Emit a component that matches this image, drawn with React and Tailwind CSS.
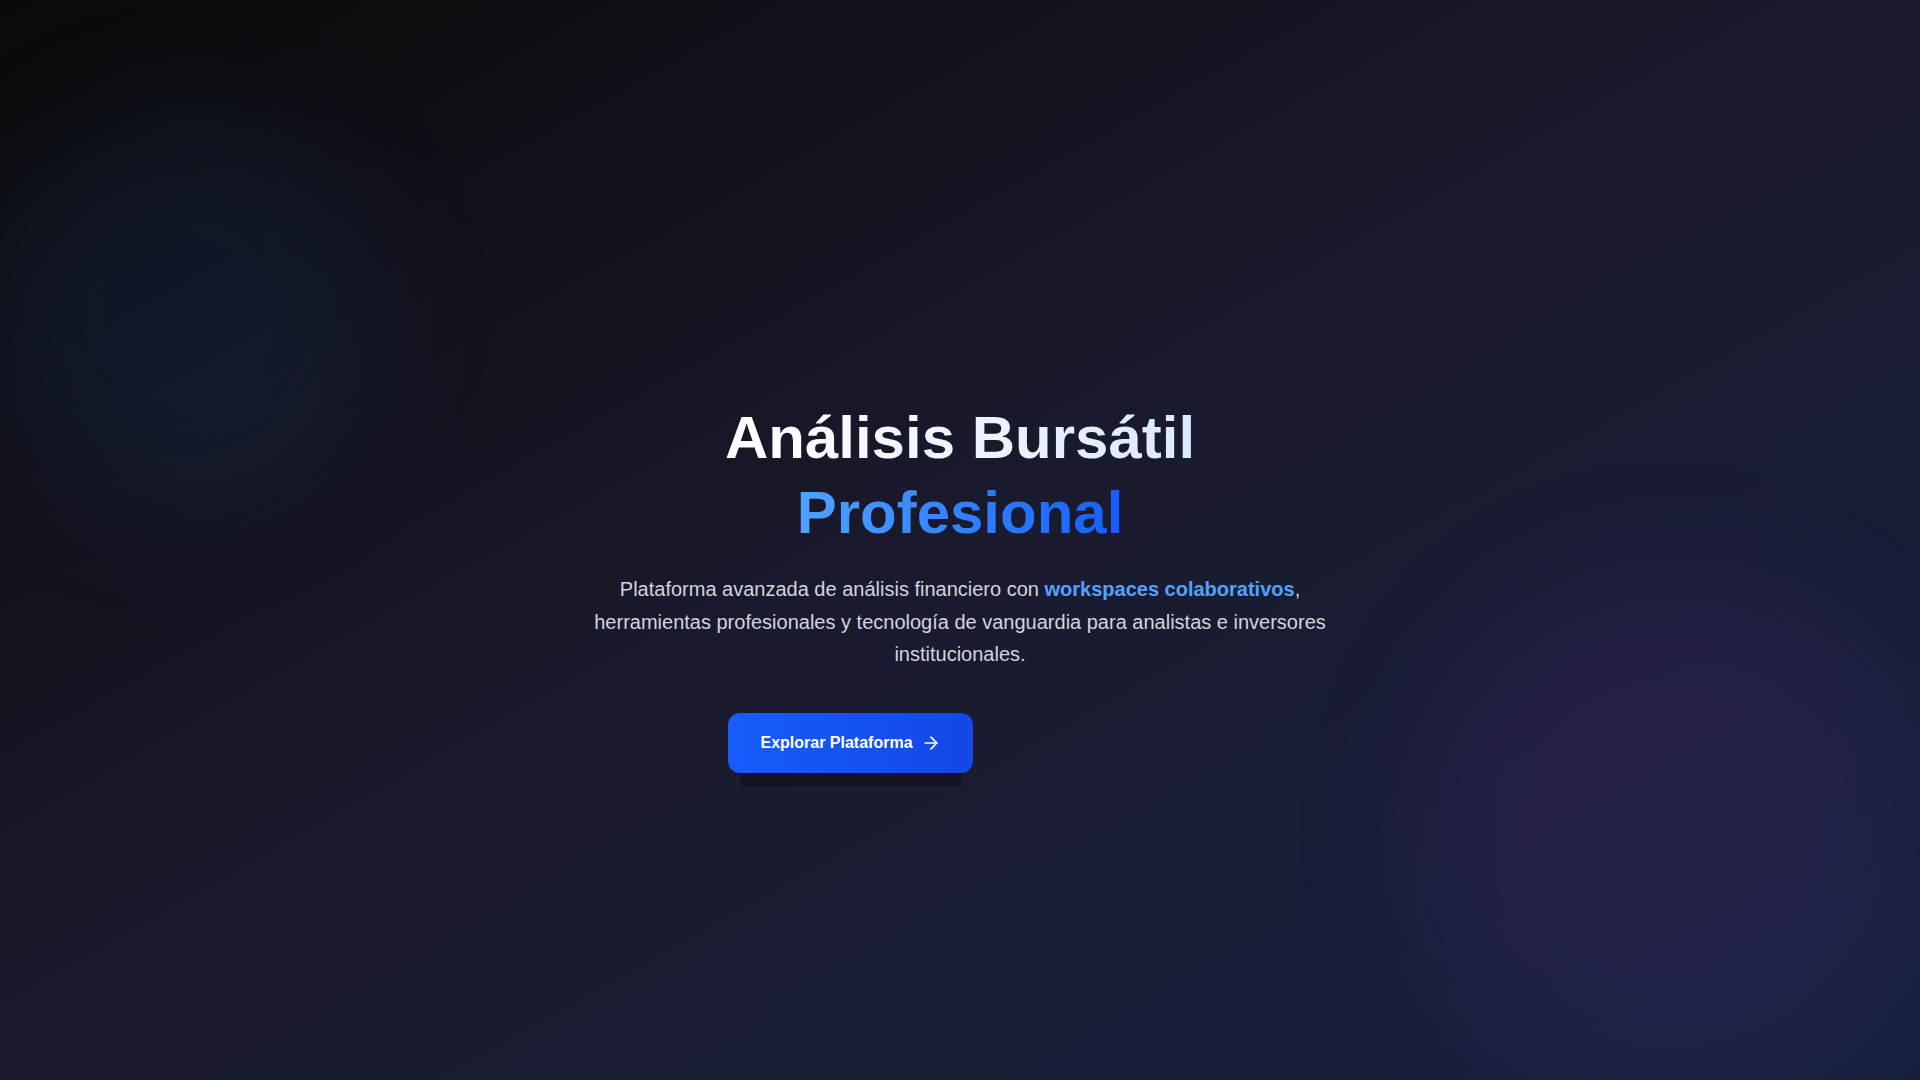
import React from 'react';
import { ArrowRight } from 'lucide-react';

const App = () => {
  return (
    <div className="relative min-h-screen bg-gradient-to-br from-[#0a0a0a] via-[#1a1a2e] to-[#16213e] font-['Liberation_Sans',Arial,sans-serif] text-white">
      {/* background glows */}
      <div className="pointer-events-none absolute left-[-20px] top-[110px] h-[400px] w-[400px] rounded-full bg-blue-500/[0.07] blur-3xl"></div>
      <div className="pointer-events-none absolute left-[1410px] top-[570px] h-[520px] w-[520px] rounded-full bg-purple-500/[0.07] blur-3xl"></div>

      <section className="relative flex min-h-screen items-center justify-center px-6 pt-[93px]">
        <div className="w-full max-w-4xl text-center">
          <h1 className="mb-[23px] text-6xl font-bold leading-tight">
            <span className="mx-auto block w-fit bg-gradient-to-r from-white to-blue-100 bg-clip-text text-transparent">
              Análisis Bursátil
            </span>
            <span className="mx-auto block w-fit bg-gradient-to-r from-blue-400 to-blue-600 bg-clip-text text-transparent">
              Profesional
            </span>
          </h1>
          <p className="mx-auto mb-[42px] max-w-3xl text-xl leading-relaxed text-gray-300">
            Plataforma avanzada de análisis financiero con{' '}
            <span className="font-semibold text-blue-400">workspaces colaborativos</span>, herramientas profesionales y
            tecnología de vanguardia para analistas e inversores institucionales.
          </p>
          <div className="flex justify-center gap-4">
            <button className="flex h-[60px] items-center gap-2 rounded-xl bg-gradient-to-r from-blue-600 to-blue-700 px-8 text-base font-semibold text-white shadow-[0_25px_0_-12px_rgba(0,0,0,0.28)]">
              Explorar Plataforma <ArrowRight className="h-5 w-5" />
            </button>
            <div className="h-[60px] w-[203px]" aria-hidden="true"></div>
          </div>
        </div>
      </section>
    </div>
  );
};

export default App;
